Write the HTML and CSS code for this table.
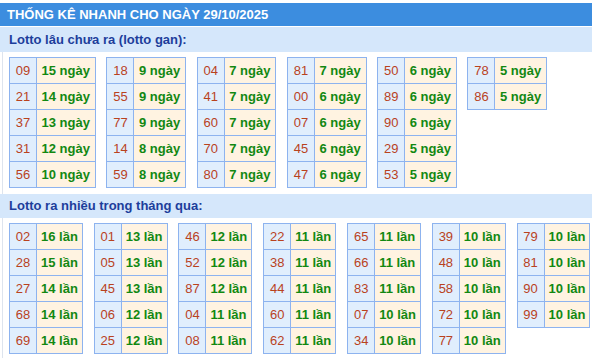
FILE: index.html
```html
<!DOCTYPE html>
<html lang="vi">
<head>
<meta charset="utf-8">
<link rel="stylesheet" href="styles.css">
</head>
<body>
<div class="page">
  <div class="title">THỐNG KÊ NHANH CHO NGÀY 29/10/2025</div>
  <div class="sec-head first">Lotto lâu chưa ra (lotto gan):</div>
  <div class="tables gan">
    <table><tr><td class="n">09</td><td class="v">15 ngày</td></tr><tr><td class="n">21</td><td class="v">14 ngày</td></tr><tr><td class="n">37</td><td class="v">13 ngày</td></tr><tr><td class="n">31</td><td class="v">12 ngày</td></tr><tr><td class="n">56</td><td class="v">10 ngày</td></tr></table>
    <table><tr><td class="n">18</td><td class="v">9 ngày</td></tr><tr><td class="n">55</td><td class="v">9 ngày</td></tr><tr><td class="n">77</td><td class="v">9 ngày</td></tr><tr><td class="n">14</td><td class="v">8 ngày</td></tr><tr><td class="n">59</td><td class="v">8 ngày</td></tr></table>
    <table><tr><td class="n">04</td><td class="v">7 ngày</td></tr><tr><td class="n">41</td><td class="v">7 ngày</td></tr><tr><td class="n">60</td><td class="v">7 ngày</td></tr><tr><td class="n">70</td><td class="v">7 ngày</td></tr><tr><td class="n">80</td><td class="v">7 ngày</td></tr></table>
    <table><tr><td class="n">81</td><td class="v">7 ngày</td></tr><tr><td class="n">00</td><td class="v">6 ngày</td></tr><tr><td class="n">07</td><td class="v">6 ngày</td></tr><tr><td class="n">45</td><td class="v">6 ngày</td></tr><tr><td class="n">47</td><td class="v">6 ngày</td></tr></table>
    <table><tr><td class="n">50</td><td class="v">6 ngày</td></tr><tr><td class="n">89</td><td class="v">6 ngày</td></tr><tr><td class="n">90</td><td class="v">6 ngày</td></tr><tr><td class="n">29</td><td class="v">5 ngày</td></tr><tr><td class="n">53</td><td class="v">5 ngày</td></tr></table>
    <table><tr><td class="n">78</td><td class="v">5 ngày</td></tr><tr><td class="n">86</td><td class="v">5 ngày</td></tr></table>
  </div>
  <div class="sec-head second">Lotto ra nhiều trong tháng qua:</div>
  <div class="tables nhieu">
    <table><tr><td class="n">02</td><td class="v">16 lần</td></tr><tr><td class="n">28</td><td class="v">15 lần</td></tr><tr><td class="n">27</td><td class="v">14 lần</td></tr><tr><td class="n">68</td><td class="v">14 lần</td></tr><tr><td class="n">69</td><td class="v">14 lần</td></tr></table>
    <table><tr><td class="n">01</td><td class="v">13 lần</td></tr><tr><td class="n">05</td><td class="v">13 lần</td></tr><tr><td class="n">45</td><td class="v">13 lần</td></tr><tr><td class="n">06</td><td class="v">12 lần</td></tr><tr><td class="n">25</td><td class="v">12 lần</td></tr></table>
    <table><tr><td class="n">46</td><td class="v">12 lần</td></tr><tr><td class="n">52</td><td class="v">12 lần</td></tr><tr><td class="n">87</td><td class="v">12 lần</td></tr><tr><td class="n">04</td><td class="v">11 lần</td></tr><tr><td class="n">08</td><td class="v">11 lần</td></tr></table>
    <table><tr><td class="n">22</td><td class="v">11 lần</td></tr><tr><td class="n">38</td><td class="v">11 lần</td></tr><tr><td class="n">44</td><td class="v">11 lần</td></tr><tr><td class="n">60</td><td class="v">11 lần</td></tr><tr><td class="n">62</td><td class="v">11 lần</td></tr></table>
    <table><tr><td class="n">65</td><td class="v">11 lần</td></tr><tr><td class="n">66</td><td class="v">11 lần</td></tr><tr><td class="n">83</td><td class="v">11 lần</td></tr><tr><td class="n">07</td><td class="v">10 lần</td></tr><tr><td class="n">34</td><td class="v">10 lần</td></tr></table>
    <table><tr><td class="n">39</td><td class="v">10 lần</td></tr><tr><td class="n">48</td><td class="v">10 lần</td></tr><tr><td class="n">58</td><td class="v">10 lần</td></tr><tr><td class="n">72</td><td class="v">10 lần</td></tr><tr><td class="n">77</td><td class="v">10 lần</td></tr></table>
    <table><tr><td class="n">79</td><td class="v">10 lần</td></tr><tr><td class="n">81</td><td class="v">10 lần</td></tr><tr><td class="n">90</td><td class="v">10 lần</td></tr><tr><td class="n">99</td><td class="v">10 lần</td></tr></table>
  </div>
</div>
</body>
</html>
```
FILE: styles.css
```css
html, body {
  margin: 0;
  padding: 0;
  background: #ffffff;
}
.page {
  padding-top: 3px;
  font-family: "Liberation Sans", Arial, sans-serif;
  font-size: 13px;
}
.title {
  height: 23px;
  line-height: 23px;
  background: #3c8ddf;
  color: #ffffff;
  font-weight: bold;
  padding-left: 7px;
}
.sec-head {
  background: #d5e7fb;
  color: #1d3e9b;
  font-weight: bold;
  padding-left: 9px;
}
.sec-head.first {
  margin-top: 1px;
  height: 25px;
  line-height: 25px;
}
.sec-head.second {
  height: 24px;
  line-height: 24px;
}
.tables {
  display: flex;
  align-items: flex-start;
  gap: 10.6px;
  margin-left: 2px;
  border-left: 1px solid #dde4ee;
  padding: 5px 0 6px 6px;
}
.tables.nhieu {
  gap: 10.9px;
}
table {
  border-collapse: collapse;
  border: 1px solid #8db3ef;
}
td {
  border: 1px solid #8db3ef;
  line-height: 15px;
  font-size: 13px;
  white-space: nowrap;
}
td.n {
  background: #e0eefd;
  color: #b9421e;
  text-align: center;
  padding: 5px 5.75px;
}
td.v {
  background: #fff3e1;
  color: #128812;
  font-weight: bold;
  padding: 5px 5px 5px 4.5px;
}
.nhieu td.v {
  padding: 5px 4px;
}
```
